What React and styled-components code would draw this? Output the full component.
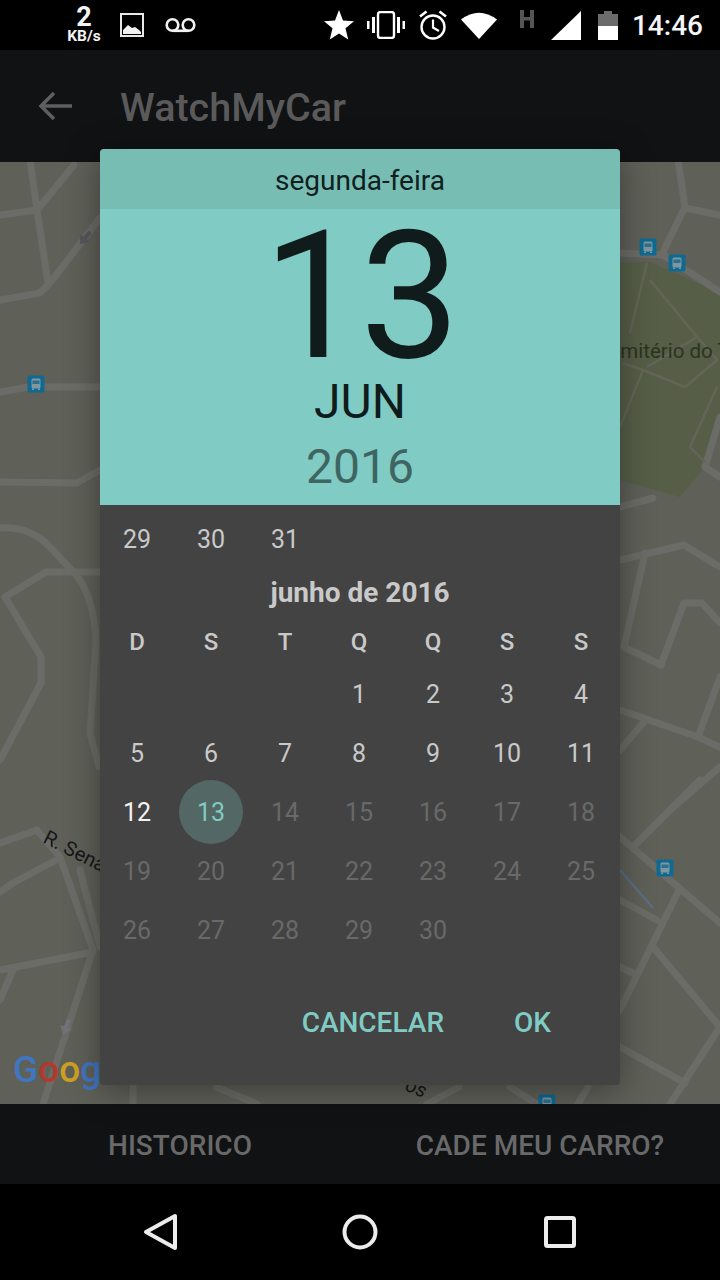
import React from 'react';
import styled, { createGlobalStyle } from 'styled-components';

const GlobalStyle = createGlobalStyle`
    html, body {
        margin: 0;
        padding: 0;
        background: #000;
    }
    body {
        font-family: Roboto, "Liberation Sans", sans-serif;
    }
`

const Screen = styled.div`
    position: relative;
    display: flex;
    flex-direction: column;
    width: 720px;
    height: 1280px;
    overflow: hidden;
    background: #000;
`

const StatusBar = styled.div`
    display: flex;
    align-items: center;
    justify-content: space-between;
    height: 50px;
    padding: 0 17px 0 66px;
    flex-shrink: 0;
    color: #fff;
`

const StatusGroup = styled.div`
    display: flex;
    align-items: center;
`

const Speed = styled.div`
    display: flex;
    flex-direction: column;
    align-items: center;
    width: 36px;
    margin: -2px 18px 0 0;
    font-weight: 700;
    color: #f2f2f2;
`

const SpeedValue = styled.span`
    font-size: 27px;
    line-height: 22px;
`

const SpeedUnit = styled.span`
    font-size: 15.5px;
    line-height: 14px;
    margin-top: 1px;
`

const StatusIcon = styled.svg`
    display: block;
    flex-shrink: 0;
    margin-right: ${(p) => p.$gap || 0}px;
    margin-top: ${(p) => p.$top || 0}px;
`

const Clock = styled.span`
    font-size: 28px;
    font-weight: 500;
    line-height: 34px;
    margin-top: 2px;
    color: #f5f5f5;
`

const AppBar = styled.div`
    display: flex;
    align-items: center;
    height: 112px;
    padding-left: 37px;
    flex-shrink: 0;
    background: #111214;
`

const Title = styled.h1`
    margin: 2px 0 0 47px;
    font-size: 39.5px;
    font-weight: 500;
    color: #5a5a5b;
`

const MapArea = styled.div`
    flex: 1;
    min-height: 0;
    background: #5f6058;
`

const MapDrawing = styled.svg`
    display: block;
    width: 100%;
    height: 100%;
`

const BottomBar = styled.div`
    display: flex;
    height: 80px;
    flex-shrink: 0;
    background: #111214;
`

const BottomButton = styled.div`
    flex: 1;
    display: flex;
    align-items: center;
    justify-content: center;
    padding-top: 2px;
    font-size: 28px;
    font-weight: 500;
    color: #69696a;
`

const NavBar = styled.div`
    display: grid;
    grid-template-columns: repeat(3, 200px);
    justify-content: center;
    align-items: center;
    height: 96px;
    flex-shrink: 0;
    background: #000;
`

const NavIcon = styled.svg`
    display: block;
    justify-self: center;
`

const Dialog = styled.div`
    position: absolute;
    top: 149px;
    left: 100px;
    display: flex;
    flex-direction: column;
    width: 520px;
    height: 936px;
    border-radius: 4px;
    overflow: hidden;
    background: #434343;
    box-shadow: 0 6px 34px rgba(0, 0, 0, 0.38);
`

const Weekday = styled.div`
    height: 60px;
    line-height: 64px;
    text-align: center;
    font-size: 28px;
    color: #10201f;
    background: #78bdb4;
`

const DateBlock = styled.div`
    display: flex;
    flex-direction: column;
    align-items: center;
    height: 296px;
    background: #80cbc4;
`

const DateDay = styled.div`
    height: 166px;
    font-size: 178px;
    line-height: 175px;
    letter-spacing: -3px;
    color: #101c1c;
`

const DateMonth = styled.div`
    height: 62px;
    font-size: 48px;
    line-height: 54px;
    color: #101c1c;
`

const DateYear = styled.div`
    font-size: 48px;
    line-height: 60px;
    color: #3f6563;
`

const Calendar = styled.div`
    display: flex;
    flex-direction: column;
    flex: 1;
    padding-top: 4px;
`

const Grid = styled.div`
    display: grid;
    grid-template-columns: repeat(7, 74px);
    grid-auto-rows: ${(p) => p.$row}px;
`

const MonthTitle = styled.div`
    height: 48px;
    line-height: 50px;
    text-align: center;
    font-size: 28px;
    font-weight: 700;
    color: #c9c9c9;
`

const DayHead = styled.div`
    display: flex;
    align-items: center;
    justify-content: center;
    padding-top: 3px;
    font-size: 24px;
    font-weight: 500;
    color: #c9c9c9;
`

const dayColors = { normal: '#c9c9c9', today: '#f2f2f2', off: '#696969', selected: '#80cbc4' };

const Day = styled.div`
    display: flex;
    align-items: center;
    justify-content: center;
    padding-top: 2px;
    font-size: 25px;
    color: ${(p) => dayColors[p.$state]};
`

const SelectedCircle = styled.span`
    display: flex;
    align-items: center;
    justify-content: center;
    box-sizing: border-box;
    flex-shrink: 0;
    width: 64px;
    height: 64px;
    margin-top: -2px;
    padding-top: 2px;
    border-radius: 50%;
    background: #536764;
`

const EmptyDays = styled.div`
    grid-column: span ${(p) => p.$count};
`

const Actions = styled.div`
    display: flex;
    justify-content: flex-end;
    gap: 70px;
    padding: 45px 69px 0 0;
`

const ActionButton = styled.div`
    font-size: 28px;
    font-weight: 500;
    line-height: 38px;
    color: #80cbc4;
`

const roads = [
    'M30 160 L37 210 L48 283',
    'M0 215 L37 210 L74 165',
    'M0 300 L40 293 L50 283 L100 218',
    'M0 392 L28 387 L100 387',
    'M0 482 L77 483 L100 470',
    'M0 528 Q30 526 50 547 L78 577 Q94 600 96 640 L90 733 L99 767',
    'M100 572 L46 572 L5 597 L41 657 L41 683 L0 760',
    'M0 843 L37 830 L60 857 L93 950 L67 1030 L43 1104',
    'M0 892 L13 883 L60 858',
    'M0 970 L93 952',
    'M13 970 L0 1000',
    'M80 870 L100 947',
    'M133 1080 L133 1104',
    'M216 1087 L257 1104',
    'M459 1087 L427 1104',
    'M510 1087 L537 1104',
    'M588 1087 L578 1104',
    'M678 160 L685 207 L663 252',
    'M685 208 L720 215',
    'M620 253 L663 255 L720 292',
    'M720 417 L705 467 L720 477',
    'M620 507 L653 498',
    'M620 560 L684 545 L720 567',
    'M645 553 L624 647 L661 665 L684 603 L702 603 L720 623',
    'M620 710 L698 737 L720 747',
    'M698 737 L720 677',
    'M643 723 L620 750',
    'M720 767 L670 810',
    'M700 780 L635 845',
    'M620 837 L720 923',
    'M620 900 L657 920',
    'M678 892 L620 1010',
    'M653 947 L720 1027',
    'M620 967 L637 975',
    'M620 1047 L685 1083',
    'M720 1027 L670 1104',
]

const parkPaths = [
    'M647 263 L630 333',
    'M650 280 L697 337 L717 360 L685 387 L643 370 L620 427',
    'M623 363 L643 370',
    'M697 337 L647 367',
    'M717 387 L690 447 L705 462',
]

const BusStop = ({ x, y }) => (
    <g transform={`translate(${x - 8.5} ${y - 8.5})`}>
        <rect width="17" height="17" rx="2" fill="#0e6a92" />
        <rect x="4" y="3" width="9" height="10" rx="1.5" fill="#7f979f" />
        <rect x="5" y="5" width="7" height="3.5" fill="#2f6f8c" />
        <rect x="4.5" y="13" width="2" height="1.5" fill="#7f979f" />
        <rect x="10.5" y="13" width="2" height="1.5" fill="#7f979f" />
    </g>
)

const OneWay = ({ x, y, angle, color }) => (
    <path
        transform={`translate(${x} ${y}) rotate(${angle})`}
        d="M-2-8 L2-8 L2 0 L6 0 L0 8 L-6 0 L-2 0 Z"
        fill={color}
    />
)

const MapView = () => (
    <MapDrawing viewBox="0 162 720 942" preserveAspectRatio="none">
        <path d="M620 263 L650 262 L720 293 L720 420 L705 467 L680 497 L620 480 Z" fill="#565e47" />
        <g fill="none" stroke="#6b6c67" strokeWidth="7" strokeLinejoin="round" strokeLinecap="round">
            {roads.map((d) => <path key={d} d={d} />)}
        </g>
        <g fill="none" stroke="#636558" strokeWidth="2.5" strokeLinejoin="round">
            {parkPaths.map((d) => <path key={d} d={d} />)}
        </g>
        <path d="M620 870 L653 908" fill="none" stroke="#5a6f84" strokeWidth="2.5" />
        <OneWay x={85} y={238} angle={40} color="#56565c" />
        <OneWay x={66} y={1027} angle={20} color="#72727a" />
        <BusStop x={36} y={384} />
        <BusStop x={648} y={247} />
        <BusStop x={677} y={263} />
        <BusStop x={665} y={868} />
        <BusStop x={547} y={1103} />
        <text x="596" y="358" fontSize="20.5" fill="#2b3322" fontFamily="Roboto, sans-serif">Cemitério do T</text>
        <text x="42" y="842" fontSize="20" fill="#17171b" fontFamily="Roboto, sans-serif" transform="rotate(27 42 842)">R. Sena</text>
        <text x="404" y="1090" fontSize="20" fontStyle="italic" fill="#17171b" fontFamily="Roboto, sans-serif" transform="rotate(22 404 1090)">os</text>
        <text x="13" y="1082" fontSize="37" fontWeight="500" fontFamily="Roboto, sans-serif">
            <tspan fill="#4075c0">G</tspan>
            <tspan fill="#b03a2e">o</tspan>
            <tspan fill="#cca024">o</tspan>
            <tspan fill="#4075c0">g</tspan>
        </text>
    </MapDrawing>
)

const lastMay = [29, 30, 31];
const weekHeads = ['D', 'S', 'T', 'Q', 'Q', 'S', 'S'];
const juneDays = Array.from({ length: 30 }, (_, i) => i + 1);

const dayState = (day) => {
    if (day === 13) return 'selected';
    if (day === 12) return 'today';
    return day > 13 ? 'off' : 'normal';
}

const App = () => {
    return <Screen>
        <GlobalStyle />
        <StatusBar>
            <StatusGroup>
                <Speed>
                    <SpeedValue>2</SpeedValue>
                    <SpeedUnit>KB/s</SpeedUnit>
                </Speed>
                <StatusIcon $gap={21} width="24" height="24" viewBox="0 0 24 24">
                    <rect x="1" y="1" width="22" height="22" fill="none" stroke="#e8e8e8" strokeWidth="2" />
                    <path d="M3 21 L3 17 L8 12 L12 15 L15 14 L19 17 L21 19 L21 21 Z" fill="#f2f2f2" />
                </StatusIcon>
                <StatusIcon width="31" height="16" viewBox="0 0 31 16">
                    <circle cx="7.5" cy="8" r="5.8" fill="none" stroke="#f2f2f2" strokeWidth="2.6" />
                    <circle cx="23.5" cy="8" r="5.8" fill="none" stroke="#f2f2f2" strokeWidth="2.6" />
                    <rect x="7.5" y="12.5" width="16" height="2.6" fill="#f2f2f2" />
                </StatusIcon>
            </StatusGroup>
            <StatusGroup>
                <StatusIcon $gap={13} width="30" height="30" viewBox="0 0 30 30">
                    <path d="M15 0 L19 10.5 L30 11.3 L21.5 18.3 L24.2 29.5 L15 23.5 L5.8 29.5 L8.5 18.3 L0 11.3 L11 10.5 Z" fill="#fff" />
                </StatusIcon>
                <StatusIcon $gap={13} width="38" height="28" viewBox="0 0 38 28">
                    <rect x="11" y="1" width="16" height="26" rx="2.5" fill="none" stroke="#fff" strokeWidth="2.4" />
                    <rect x="0" y="10" width="2.5" height="8" fill="#fff" />
                    <rect x="5" y="6" width="3" height="16" fill="#fff" />
                    <rect x="30" y="6" width="3" height="16" fill="#fff" />
                    <rect x="35.5" y="10" width="2.5" height="8" fill="#fff" />
                </StatusIcon>
                <StatusIcon $gap={13} width="30" height="30" viewBox="0 0 30 30">
                    <circle cx="15" cy="17" r="11.5" fill="none" stroke="#fff" strokeWidth="2.4" />
                    <path d="M15 9.5 L15 17.5 L21 21" fill="none" stroke="#fff" strokeWidth="2.2" />
                    <path d="M2 6.5 L8.5 1.5 M28 6.5 L21.5 1.5" stroke="#fff" strokeWidth="2.6" />
                </StatusIcon>
                <StatusIcon $gap={22} width="36" height="27" viewBox="0 0 36 27">
                    <path d="M0 7.5 Q18 -6 36 7.5 L18 27 Z" fill="#fff" />
                </StatusIcon>
                <StatusIcon $gap={16} $top={-12} width="16" height="18" viewBox="0 0 16 18">
                    <path d="M1 0 L5 0 L5 7 L11 7 L11 0 L15 0 L15 18 L11 18 L11 10.5 L5 10.5 L5 18 L1 18 Z" fill="#555" />
                </StatusIcon>
                <StatusIcon $gap={17} width="30" height="29" viewBox="0 0 30 29">
                    <path d="M30 0 L30 29 L0 29 Z" fill="#fff" />
                </StatusIcon>
                <StatusIcon $gap={14} width="20" height="29" viewBox="0 0 20 29">
                    <path d="M6 0 L14 0 L14 3 L20 3 L20 15 L0 15 L0 3 L6 3 Z" fill="#6b6b6b" />
                    <rect x="0" y="15" width="20" height="14" fill="#fff" />
                </StatusIcon>
                <Clock>14:46</Clock>
            </StatusGroup>
        </StatusBar>

        <AppBar>
            <svg width="36" height="32" viewBox="0 0 36 32">
                <path d="M35 16 L4 16 M17 3 L4 16 L17 29" fill="none" stroke="#5f5f60" strokeWidth="3.5" />
            </svg>
            <Title>WatchMyCar</Title>
        </AppBar>

        <MapArea>
            <MapView />
        </MapArea>

        <BottomBar>
            <BottomButton>HISTORICO</BottomButton>
            <BottomButton>CADE MEU CARRO?</BottomButton>
        </BottomBar>

        <NavBar>
            <NavIcon width="36" height="38" viewBox="0 0 36 38">
                <path d="M33 3 L33 35 L4 19 Z" fill="none" stroke="#ececec" strokeWidth="4" strokeLinejoin="round" />
            </NavIcon>
            <NavIcon width="36" height="36" viewBox="0 0 36 36">
                <circle cx="18" cy="18" r="15.5" fill="none" stroke="#ececec" strokeWidth="4" />
            </NavIcon>
            <NavIcon width="34" height="34" viewBox="0 0 34 34">
                <rect x="3" y="3" width="28" height="28" rx="1.5" fill="none" stroke="#ececec" strokeWidth="4" />
            </NavIcon>
        </NavBar>

        <Dialog>
            <Weekday>segunda-feira</Weekday>
            <DateBlock>
                <DateDay>13</DateDay>
                <DateMonth>JUN</DateMonth>
                <DateYear>2016</DateYear>
            </DateBlock>
            <Calendar>
                <Grid $row={59}>
                    {lastMay.map((day) => <Day key={day} $state="normal">{day}</Day>)}
                </Grid>
                <MonthTitle>junho de 2016</MonthTitle>
                <Grid $row={48}>
                    {weekHeads.map((head, i) => <DayHead key={i}>{head}</DayHead>)}
                </Grid>
                <Grid $row={59}>
                    <EmptyDays $count={3} />
                    {juneDays.map((day) => (
                        <Day key={day} $state={dayState(day)}>
                            {day === 13 ? <SelectedCircle>{day}</SelectedCircle> : day}
                        </Day>
                    ))}
                </Grid>
                <Actions>
                    <ActionButton>CANCELAR</ActionButton>
                    <ActionButton>OK</ActionButton>
                </Actions>
            </Calendar>
        </Dialog>
    </Screen>
}

export default App;
